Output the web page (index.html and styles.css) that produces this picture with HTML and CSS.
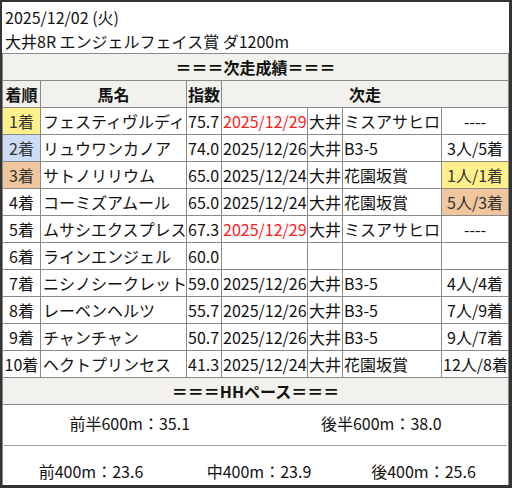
FILE: index.html
```html
<!DOCTYPE html>
<html lang="ja">
<head>
<meta charset="utf-8">
<title>次走成績</title>
<link rel="stylesheet" href="styles.css">
</head>
<body>
<div class="frame">
  <div class="info">
    <div class="line">2025/12/02 (火)</div>
    <div class="line">大井8R エンジェルフェイス賞 ダ1200m</div>
  </div>
  <table class="results">
    <colgroup>
      <col class="c-rank"><col class="c-name"><col class="c-idx"><col class="c-date"><col class="c-place"><col class="c-race"><col class="c-res">
    </colgroup>
    <thead>
      <tr class="bar"><th colspan="7">＝＝＝次走成績＝＝＝</th></tr>
      <tr class="head"><th>着順</th><th>馬名</th><th>指数</th><th colspan="4">次走</th></tr>
    </thead>
    <tbody>
      <tr><td class="rank gold">1着</td><td class="name">フェスティヴルディ</td><td>75.7</td><td class="red">2025/12/29</td><td>大井</td><td>ミスアサヒロ</td><td class="res">----</td></tr>
      <tr><td class="rank silver">2着</td><td class="name">リュウワンカノア</td><td>74.0</td><td>2025/12/26</td><td>大井</td><td>B3-5</td><td class="res">3人/5着</td></tr>
      <tr><td class="rank bronze">3着</td><td class="name">サトノリリウム</td><td>65.0</td><td>2025/12/24</td><td>大井</td><td>花園坂賞</td><td class="res gold">1人/1着</td></tr>
      <tr><td class="rank">4着</td><td class="name">コーミズアムール</td><td>65.0</td><td>2025/12/24</td><td>大井</td><td>花園坂賞</td><td class="res bronze">5人/3着</td></tr>
      <tr><td class="rank">5着</td><td class="name">ムサシエクスプレス</td><td>67.3</td><td class="red">2025/12/29</td><td>大井</td><td>ミスアサヒロ</td><td class="res">----</td></tr>
      <tr><td class="rank">6着</td><td class="name">ラインエンジェル</td><td>60.0</td><td></td><td></td><td></td><td class="res"></td></tr>
      <tr><td class="rank">7着</td><td class="name">ニシノシークレット</td><td>59.0</td><td>2025/12/26</td><td>大井</td><td>B3-5</td><td class="res">4人/4着</td></tr>
      <tr><td class="rank">8着</td><td class="name">レーベンヘルツ</td><td>55.7</td><td>2025/12/26</td><td>大井</td><td>B3-5</td><td class="res">7人/9着</td></tr>
      <tr><td class="rank">9着</td><td class="name">チャンチャン</td><td>50.7</td><td>2025/12/26</td><td>大井</td><td>B3-5</td><td class="res">9人/7着</td></tr>
      <tr><td class="rank">10着</td><td class="name">ヘクトプリンセス</td><td>41.3</td><td>2025/12/24</td><td>大井</td><td>花園坂賞</td><td class="res">12人/8着</td></tr>
    </tbody>
  </table>
  <div class="pace">
    <div class="pace-title">＝＝＝HHペース＝＝＝</div>
    <div class="pace-half">
      <span>前半600m：35.1</span>
      <span>後半600m：38.0</span>
    </div>
    <div class="pace-third">
      <span>前400m：23.6</span>
      <span>中400m：23.9</span>
      <span>後400m：25.6</span>
    </div>
  </div>
</div>
</body>
</html>
```
FILE: styles.css
```css
* { box-sizing: border-box; }
html, body {
  margin: 0;
  padding: 0;
  background: #333;
}
body {
  font-family: "Noto Sans CJK JP", "Noto Sans", sans-serif;
  font-size: 16px;
  color: #111;
}
.frame {
  width: 512px;
  height: 488px;
  border-style: solid;
  border-color: #343434;
  border-width: 2px 3px 3px 2px;
  background: #fff;
  display: flex;
  flex-direction: column;
}
.info {
  padding: 3px 3px 0;
  height: 51px;
}
.line {
  line-height: 24px;
  white-space: nowrap;
}
.results {
  border-collapse: collapse;
  table-layout: fixed;
  width: 507px;
}
.c-rank { width: 38px; }
.c-name { width: 146px; }
.c-idx { width: 35px; }
.c-date { width: 86px; }
.c-place { width: 35px; }
.c-race { width: 99px; }
.c-res { width: 67px; }
.results th,
.results td {
  border: 1px solid #8a8a8a;
  line-height: 24px;
  height: 27px;
  padding: 1px 1px;
  white-space: nowrap;
  overflow: hidden;
  text-align: left;
  font-weight: normal;
}
.results th {
  background: #f2f1ed;
  font-weight: bold;
  text-align: center;
}
.results td.name { padding-left: 2px; }
.results td.rank,
.results td.res { text-align: center; }
.red { color: #ff1a1a; }
.gold { background: #fff08c; color: #333; }
.silver { background: #ccdcf6; color: #333; }
.bronze { background: #efc69e; color: #333; }
.pace {
  flex: 1;
  border-left: 1px solid #8a8a8a;
  border-right: 1px solid #8a8a8a;
}
.pace-title {
  height: 27px;
  line-height: 24px;
  padding-top: 1px;
  background: #f2f1ed;
  border-bottom: 1px solid #8a8a8a;
  text-align: center;
  font-weight: bold;
}
.pace-half {
  display: grid;
  grid-template-columns: 1fr 1fr;
  height: 41px;
  padding-top: 6px;
  line-height: 24px;
  margin: 0 1px;
  border-bottom: 1px solid #a0a0a0;
  text-align: center;
}
.pace-third {
  display: grid;
  grid-template-columns: 176px 160px 1fr;
  padding-top: 13px;
  line-height: 24px;
  text-align: center;
}
```
